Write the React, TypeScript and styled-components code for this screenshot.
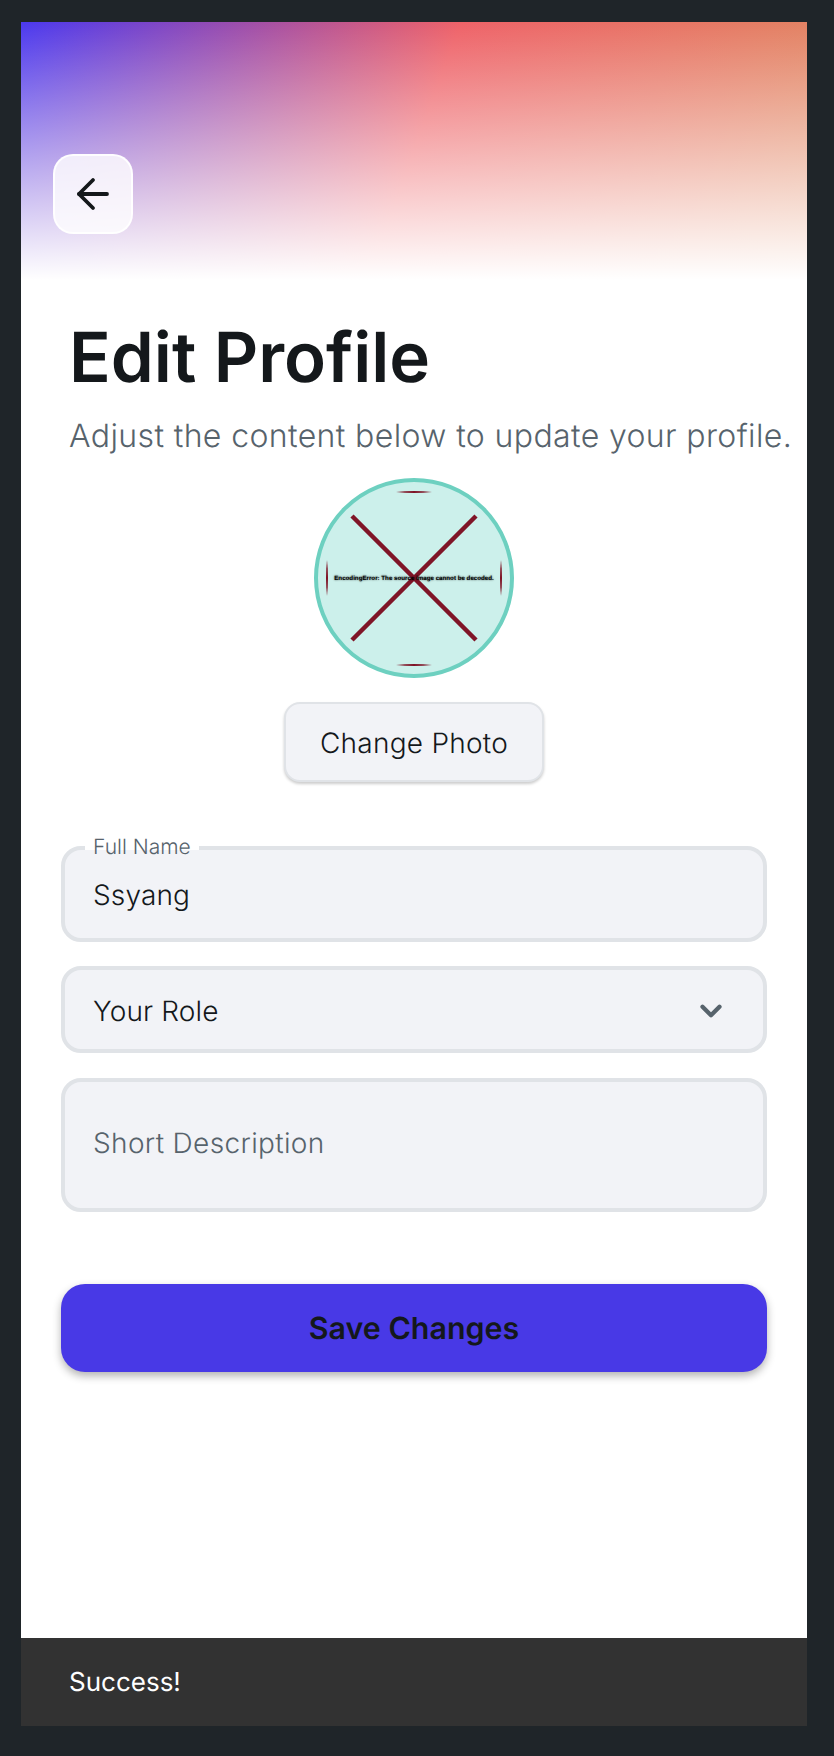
import React from 'react';
import styled, {createGlobalStyle} from "styled-components";
import {ArrowLeft, ChevronDown} from "lucide-react";

const GlobalStyle = createGlobalStyle`
    html, body {
        margin: 0;
        padding: 0;
        background: #1f2529;
    }

    * {
        box-sizing: border-box;
        text-rendering: geometricPrecision;
    }
`;

const StyledPage = styled.div`
    width: 834px;
    height: 1756px;
    padding: 22px 27px 30px 21px;
    font-family: Inter, "Liberation Sans", sans-serif;
    background: #1f2529;
`;

const StyledPhone = styled.div`
    display: flex;
    flex-direction: column;
    height: 100%;
    background: #fff;
`;

const StyledHero = styled.div`
    display: flex;
    align-items: flex-end;
    flex-shrink: 0;
    height: 258px;
    padding: 0 0 46px 32px;
    background:
        linear-gradient(to bottom, rgba(255, 255, 255, 0) 0%, #fff 100%),
        linear-gradient(110deg, #4b39ef 0%, #ee6268 50%, #e08a62 100%);
`;

const StyledBackButton = styled.button`
    display: flex;
    align-items: center;
    justify-content: center;
    width: 80px;
    height: 80px;
    padding: 0;
    color: #14181b;
    background: rgba(255, 255, 255, 0.8);
    border: 2px solid rgba(255, 255, 255, 0.9);
    border-radius: 20px;
`;

const StyledIntro = styled.div`
    padding: 34px 0 0 48px;
`;

const StyledTitle = styled.h1`
    margin: 0 0 15px;
    color: #14181b;
    font-size: 69px;
    font-weight: 600;
    line-height: 87px;
`;

const StyledSubtitle = styled.p`
    margin: 0;
    color: #57636c;
    font-size: 32px;
    font-weight: 350;
    line-height: 39px;
    letter-spacing: 0.38px;
    white-space: nowrap;
`;

const StyledPhotoColumn = styled.div`
    display: flex;
    flex-direction: column;
    align-items: center;
    gap: 24px;
    padding-top: 23px;
`;

const StyledAvatar = styled.div`
    display: grid;
    place-items: center;
    width: 200px;
    height: 200px;
    background: #ccf0eb;
    border: 4px solid #6dd0c0;
    border-radius: 50%;

    & > * {
        grid-area: 1 / 1;
    }
`;

const StyledImageError = styled.span`
    color: #000;
    font-family: "Liberation Sans", Arial, sans-serif;
    font-size: 6.2px;
    font-weight: 700;
    white-space: nowrap;
    text-shadow: 0 0 2px rgba(0, 0, 0, 0.75);
`;

const StyledChangePhoto = styled.button`
    width: 260px;
    height: 80px;
    padding: 2px 0 0;
    color: #14181b;
    font-family: inherit;
    font-size: 28px;
    font-weight: 350;
    letter-spacing: 0.25px;
    background: #f2f3f7;
    border: 2px solid #e0e3e7;
    border-radius: 16px;
    box-shadow: 0 2px 3px rgba(0, 0, 0, 0.2);
`;

const StyledForm = styled.form`
    display: flex;
    flex-direction: column;
    padding: 64px 40px 0;
`;

const StyledField = styled.div`
    position: relative;
    margin-bottom: 24px;
`;

const StyledFloatingLabel = styled.label`
    position: absolute;
    top: -12px;
    left: 24px;
    padding: 0 8px;
    color: #57636c;
    font-size: 21px;
    font-weight: 350;
    line-height: 28px;
    background: linear-gradient(to bottom, #fff 16px, transparent 16px);
`;

const StyledInput = styled.input`
    display: block;
    width: 100%;
    height: 96px;
    padding: 2px 28px 0;
    color: #14181b;
    font-family: inherit;
    font-size: 28px;
    font-weight: 350;
    letter-spacing: 0.15px;
    background: #f2f3f7;
    border: 4px solid #e0e3e7;
    border-radius: 20px;
    outline: none;
`;

const StyledSelect = styled.div`
    display: flex;
    align-items: center;
    justify-content: space-between;
    height: 87px;
    margin-bottom: 25px;
    padding: 2px 35px 0 28px;
    color: #14181b;
    font-size: 28px;
    font-weight: 350;
    letter-spacing: 0.15px;
    background: #f2f3f7;
    border: 4px solid #e0e3e7;
    border-radius: 20px;
`;

const StyledTextArea = styled.div`
    display: flex;
    align-items: center;
    height: 134px;
    padding: 0 28px 4px;
    color: #57636c;
    font-size: 28px;
    font-weight: 350;
    letter-spacing: 0.35px;
    background: #f2f3f7;
    border: 4px solid #e0e3e7;
    border-radius: 20px;
`;

const StyledSave = styled.button`
    height: 88px;
    margin-top: 72px;
    padding: 2px 0 0;
    color: #14181b;
    font-family: inherit;
    font-size: 30.4px;
    font-weight: 600;
    background: #4839e6;
    border: none;
    border-radius: 24px;
    box-shadow: 0 4px 8px rgba(0, 0, 0, 0.3);
`;

const StyledToast = styled.div`
    display: flex;
    align-items: center;
    height: 88px;
    margin-top: auto;
    padding-left: 48px;
    color: #fff;
    font-size: 26px;
    background: #323232;
`;

const BrokenImage = () => (
    <svg width="192" height="192" viewBox="0 0 192 192">
        <path d="M34 34L158 158M158 34L34 158" stroke="#7f1527" strokeWidth="4.5" fill="none"/>
        <path d="M78 10Q96 8 114 10Q96 12 78 10Z" fill="#7f1527"/>
        <path d="M78 183Q96 181 114 183Q96 185 78 183Z" fill="#7f1527"/>
        <path d="M9 78Q7 96 9 114Q11 96 9 78Z" fill="#7f1527"/>
        <path d="M183 78Q181 96 183 114Q185 96 183 78Z" fill="#7f1527"/>
    </svg>
);

const App = () => {
    return (
        <StyledPage>
            <GlobalStyle/>
            <StyledPhone>
                <StyledHero>
                    <StyledBackButton type="button" aria-label="Back">
                        <ArrowLeft size={48} strokeWidth={1.9}/>
                    </StyledBackButton>
                </StyledHero>
                <StyledIntro>
                    <StyledTitle>Edit Profile</StyledTitle>
                    <StyledSubtitle>Adjust the content below to update your profile.</StyledSubtitle>
                </StyledIntro>
                <StyledPhotoColumn>
                    <StyledAvatar>
                        <BrokenImage/>
                        <StyledImageError>EncodingError: The source image cannot be decoded.</StyledImageError>
                    </StyledAvatar>
                    <StyledChangePhoto type="button">Change Photo</StyledChangePhoto>
                </StyledPhotoColumn>
                <StyledForm>
                    <StyledField>
                        <StyledFloatingLabel>Full Name</StyledFloatingLabel>
                        <StyledInput defaultValue="Ssyang"/>
                    </StyledField>
                    <StyledSelect>
                        Your Role
                        <ChevronDown size={34} color="#57636c" strokeWidth={3}/>
                    </StyledSelect>
                    <StyledTextArea>Short Description</StyledTextArea>
                    <StyledSave type="button">Save Changes</StyledSave>
                </StyledForm>
                <StyledToast>Success!</StyledToast>
            </StyledPhone>
        </StyledPage>
    );
};

export default App;
